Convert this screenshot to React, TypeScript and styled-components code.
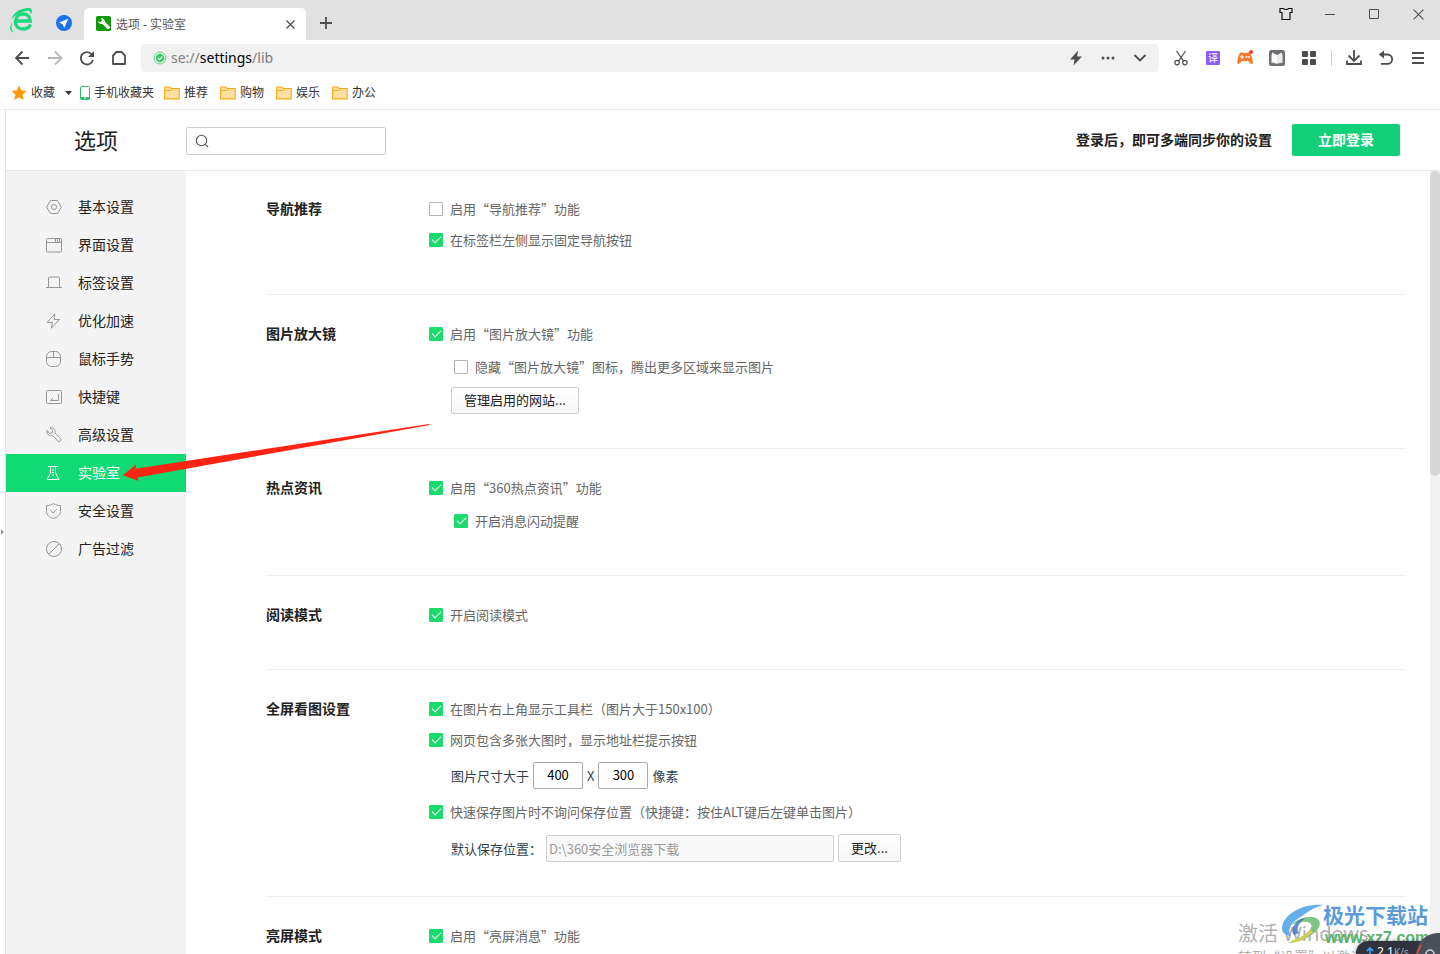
import React from "react";
import styled, { createGlobalStyle } from "styled-components";

const GlobalStyle = createGlobalStyle`
  *, *::before, *::after { box-sizing: border-box; }
  body {
    margin: 0;
    background: #fff;
    color: #222;
    font-family: "Noto Sans CJK SC", "Liberation Sans", sans-serif;
    font-size: 13px;
  }
  button, input { font-family: inherit; }
  svg { display: block; }
`;

const Browser = styled.div`
  position: relative;
  display: flex;
  flex-direction: column;
  height: 100vh;
  overflow: hidden;
`;

/* ---------- Title bar ---------- */

const TitleBar = styled.header`
  display: flex;
  flex: none;
  height: 40px;
  padding: 0 0 0 8px;
  background: #e1e1e1;
`;

const PlainButton = styled.button`
  display: flex;
  flex: none;
  align-items: center;
  justify-content: center;
  padding: 0;
  border: 0;
  background: none;
  color: #4d4d4d;
`;

const LogoButton = styled(PlainButton)`
  width: 28px;
  height: 40px;
`;

const PinnedTab = styled(PlainButton)`
  width: 24px;
  height: 46px;
  margin: 0 8px 0 16px;
`;

const Tab = styled.div`
  display: flex;
  align-items: center;
  width: 222px;
  height: 32px;
  margin-top: 8px;
  padding: 0 8px 0 12px;
  gap: 4px;
  border-radius: 5px 5px 0 0;
  background: #fff;
  color: #555;
  font-size: 12px;
`;

const TabTitle = styled.span`
  flex: 1;
  font-family: "Noto Sans", "Noto Sans CJK SC", sans-serif;
`;

const TabClose = styled(PlainButton)`
  width: 16px;
  height: 16px;
`;

const NewTab = styled(PlainButton)`
  width: 40px;
  height: 46px;
`;

const WindowControls = styled.div`
  display: flex;
  height: 28px;
  margin-left: auto;
`;

const WindowButton = styled(PlainButton)`
  width: 44px;
`;

/* ---------- Toolbar ---------- */

const Toolbar = styled.nav`
  display: flex;
  flex: none;
  align-items: center;
  height: 36px;
  padding: 0 6px 0 7px;
`;

const ToolButton = styled(PlainButton)`
  width: 32px;
  height: 28px;
`;

const AddressBar = styled.div`
  display: flex;
  flex: 1;
  align-items: center;
  height: 28px;
  margin: 0 6px;
  padding: 0 3px 0 12px;
  border-radius: 4px;
  background: #f1f1f1;
`;

const Address = styled.a`
  flex: 1;
  padding-left: 4px;
  color: #7d7d7d;
  font-family: "Noto Sans", sans-serif;
  font-size: 14px;
  line-height: 20px;
  text-decoration: none;
`;

const AddressHost = styled.span`
  color: #000;
`;

const ToolDivider = styled.span`
  width: 1px;
  height: 16px;
  margin: 0 6px;
  background: #ccc;
`;

/* ---------- Bookmarks ---------- */

const Bookmarks = styled.nav`
  display: flex;
  flex: none;
  align-items: center;
  height: 34px;
  padding-left: 11px;
  gap: 12px;
  border-bottom: 1px solid #e9e9e9;
`;

const Bookmark = styled.a`
  display: flex;
  align-items: center;
  gap: 4px;
  color: #333;
  font-size: 12px;
  line-height: 18px;
  text-decoration: none;
`;

const FavouriteGroup = styled.div`
  display: flex;
  align-items: center;
  gap: 10px;
  margin-right: -4px;
`;

const PhoneBookmark = styled(Bookmark)`
  margin-right: -2px;
`;

/* CJK glyphs sit low in their line box; the padding centres them beside an icon */
const Caption = styled.span`
  padding-bottom: 2px;
`;

/* ---------- Settings page ---------- */

const Viewport = styled.div`
  display: flex;
  flex: 1;
  min-height: 0;
`;

const Gutter = styled.div`
  display: flex;
  flex: none;
  align-items: center;
  width: 6px;
  border-right: 1px solid #e2e2e2;
`;

const Page = styled.div`
  display: flex;
  flex: 1;
  flex-direction: column;
  min-width: 0;
`;

const PageHeader = styled.header`
  display: flex;
  flex: none;
  align-items: center;
  height: 61px;
  padding-right: 40px;
  border-bottom: 1px solid #e9e9e9;
`;

const PageTitle = styled.h1`
  width: 180px;
  margin: 0;
  padding-bottom: 2px;
  font-size: 22px;
  font-weight: 400;
  line-height: 32px;
  text-align: center;
`;

const SearchBox = styled.label`
  display: flex;
  align-items: center;
  width: 200px;
  height: 28px;
  margin-top: 2px;
  padding: 0 8px;
  gap: 4px;
  border: 1px solid #ccc;
  border-radius: 2px;
`;

const SearchInput = styled.input`
  flex: 1;
  min-width: 0;
  border: 0;
  outline: 0;
  background: none;
`;

const LoginHint = styled.strong`
  margin: 0 20px 0 auto;
  padding-bottom: 2px;
  font-size: 14px;
  line-height: 20px;
`;

const LoginButton = styled.button`
  width: 108px;
  height: 32px;
  padding: 0 0 2px;
  border: 0;
  border-radius: 2px;
  background: #11d077;
  color: #fff;
  font-size: 14px;
  font-weight: 700;
`;

const PageBody = styled.div`
  display: flex;
  flex: 1;
  min-height: 0;
`;

const Sidebar = styled.nav`
  flex: none;
  width: 180px;
  padding-top: 17px;
  background: #f4f4f4;
`;

const SidebarLink = styled.a<{ $active: boolean }>`
  display: flex;
  align-items: center;
  height: 38px;
  padding-left: 40px;
  gap: 16px;
  background: ${(p) => (p.$active ? "#11da75" : "transparent")};
  color: ${(p) => (p.$active ? "#fff" : "#222")};
  font-size: 14px;
  text-decoration: none;

  svg { color: ${(p) => (p.$active ? "#fff" : "#969696")}; }
`;

const Content = styled.main`
  flex: 1;
  min-width: 0;
  padding: 0 24px 0 80px;
  overflow: hidden;
`;

const Section = styled.section<{ $tight?: boolean }>`
  display: grid;
  grid-template-columns: 163px 1fr;
  padding: 29px 0 ${(p) => (p.$tight ? 34 : 44)}px;
  border-bottom: 1px solid #efefef;

  &:first-child { padding-top: 28px; }
`;

const SectionTitle = styled.h2`
  margin: 0;
  font-size: 14px;
  font-weight: 700;
  line-height: 18px;
`;

const Options = styled.div`
  display: flex;
  flex-direction: column;
  align-items: flex-start;
  gap: 10px;
`;

const leads = { none: 0, list: 1, block: 3 };

const CheckLabel = styled.label<{ $sub?: boolean; $lead: keyof typeof leads }>`
  display: flex;
  align-items: center;
  height: 20px;
  gap: 7px;
  margin-top: ${(p) => leads[p.$lead]}px;
  margin-left: ${(p) => (p.$sub ? 25 : 0)}px;
  color: #666;
`;

const Checkbox = styled.input`
  display: flex;
  justify-content: center;
  width: 14px;
  height: 14px;
  margin: 0;
  padding-top: 2px;
  appearance: none;
  border: 1px solid #b4b4b4;
  border-radius: 1px;
  background: #fff;

  &:checked {
    border-color: #1cda6c;
    background: #1cda6c;
  }

  &:checked::before {
    content: "";
    width: 9px;
    height: 5px;
    border: solid #fff;
    border-width: 0 0 1px 1px;
    transform: rotate(-45deg);
  }
`;

const FieldRow = styled.div`
  display: flex;
  align-items: center;
  margin: 2px 0 0 22px;
  gap: 4px;
  color: #333f50;
`;

const SizeInput = styled.input`
  width: 50px;
  height: 27px;
  padding: 0 0 2px;
  border: 1px solid #aaa;
  border-radius: 2px;
  color: #000;
  font-size: 13px;
  text-align: center;
`;

const PathInput = styled.input`
  width: 288px;
  height: 27px;
  padding: 0 2px;
  border: 1px solid #d0d0d0;
  border-radius: 2px;
  background: #f9f9f9;
  color: #999;
  font-size: 13px;
`;

const ActionButton = styled.button<{ $wide?: boolean }>`
  width: ${(p) => (p.$wide ? 128 : 63)}px;
  height: ${(p) => (p.$wide ? 27 : 28)}px;
  margin-left: ${(p) => (p.$wide ? 22 : 0)}px;
  padding: 0 0 2px;
  border: 1px solid #d0d0d0;
  border-radius: 2px;
  background: linear-gradient(#fff, #f6f6f6);
  color: #222;
  font-size: 13px;
`;

const ScrollTrack = styled.div`
  flex: none;
  width: 10px;
  background: #f1f1f1;
`;

const ScrollThumb = styled.div`
  height: 39%;
  border-radius: 5px;
  background: #d6d6d6;
`;

/* ---------- Overlays ---------- */

const ArrowOverlay = styled.svg`
  position: absolute;
  top: 424px;
  left: 122px;
  pointer-events: none;
`;

const DesktopOverlay = styled.aside`
  position: absolute;
  right: 0;
  bottom: 0;
  width: 204px;
  height: 54px;
  overflow: hidden;
  pointer-events: none;
`;

const ActivateNotice = styled.p`
  position: absolute;
  top: 19px;
  left: 2px;
  margin: 0;
  color: rgba(120, 120, 120, 0.6);
  font-family: "Noto Sans", "Noto Sans CJK SC", sans-serif;
  font-size: 20px;
  line-height: 30px;
  white-space: nowrap;
`;

const ActivateHint = styled.p`
  position: absolute;
  top: 46px;
  left: 2px;
  margin: 0;
  color: rgba(120, 120, 120, 0.6);
  font-size: 14px;
  line-height: 20px;
  white-space: nowrap;
`;

const SiteMark = styled.svg`
  position: absolute;
  top: 3px;
  left: 43px;
`;

const SiteName = styled.p`
  position: absolute;
  top: 0;
  left: 87px;
  margin: 0;
  color: #5b9bd9;
  font-size: 21px;
  font-weight: 700;
  line-height: 28px;
  white-space: nowrap;
`;

const SiteUrl = styled.p`
  position: absolute;
  top: 28px;
  left: 89px;
  margin: 0;
  color: #5cb46d;
  font-family: "Liberation Sans", sans-serif;
  font-size: 16px;
  font-weight: 700;
  line-height: 20px;
`;

const SpeedBadge = styled.div`
  position: absolute;
  top: 41px;
  left: 120px;
  display: flex;
  align-items: center;
  width: 84px;
  height: 24px;
  padding: 0 0 4px 10px;
  gap: 3px;
  border-radius: 12px 0 0 0;
  background: #30333e;
  color: #fff;
  font-family: "Noto Sans", sans-serif;
  font-size: 12px;
  box-shadow: 0 0 4px rgba(0, 0, 0, 0.4);
`;

const SpeedUnit = styled.span`
  color: #a8aab0;
  font-size: 10px;
`;

const SpeedBall = styled.svg`
  position: absolute;
  top: 31px;
  right: 0;
`;

/* ---------- Icons ---------- */

const line = (width = 1) => ({
  fill: "none",
  stroke: "currentColor",
  strokeWidth: width,
});

const BrowserLogo = () => (
  <svg width="26" height="26" viewBox="0 0 26 26">
    <path
      d="M6.500 14h14.700C21 9.800 18.300 7 14 7S6.900 9.800 6.500 14zM21.600 17.500C20.200 20.500 17.600 22 14 22c-4.800 0-7.700-3.200-7.700-7.500"
      fill="none"
      stroke="#1bd97b"
      strokeWidth="3.400"
    />
    <path d="M2.500 12.500C4 6 10 2 17 1.200c3.800-.5 6.500.4 6 3-.3 1.500-1 2.500-1.700 3.400.6-2.800-.4-4.100-3.100-3.700C12 4.500 6 7.800 2.500 12.500z" fill="#1bd97b" />
    <path d="M3.600 14.500C2.300 19 1.800 23 5 25.500c-4.500-.6-5-5.500-1.400-11z" fill="#1bd97b" />
  </svg>
);

const PinnedIcon = () => (
  <svg width="16" height="16" viewBox="0 0 16 16">
    <circle cx="8" cy="8" r="8" fill="#1a73e8" />
    <path d="M12.300 3.800 3 7.600l3.700 1.600L8.200 13z" fill="#fff" />
  </svg>
);

const TabIcon = () => (
  <svg width="16" height="16" viewBox="0 0 16 16">
    <rect width="15" height="15" rx="1.500" fill="#15990b" />
    <path d="M2 5 4.200 6.200 5.900 4.600 5 2.200c2.200-.3 4 1.200 3.700 3.300l4.700 4.700a1.600 1.600 0 0 1-2.300 2.300L6.400 8C4.300 8.500 2.200 7.100 2 5z" fill="#fff" />
  </svg>
);

const CrossIcon = ({ size = 9 }: { size?: number }) => (
  <svg width={size} height={size} viewBox="0 0 9 9">
    <path d="M.5.5l8 8M8.500.5l-8 8" {...line(size > 9 ? 0.9 : 1.300)} />
  </svg>
);

const PlusIcon = () => (
  <svg width="12" height="12" viewBox="0 0 12 12">
    <path d="M6 0v12M0 6h12" {...line(1.800)} />
  </svg>
);

const ShirtIcon = () => (
  <svg width="14" height="14" viewBox="0 0 14 14">
    <path d="M1 1.500h3.500c.5 1.300 4.500 1.300 5 0H13v4h-2v7H3v-7H1z" fill="none" stroke="#111" strokeWidth="1.200" />
  </svg>
);

const MinimizeIcon = () => (
  <svg width="10" height="10" viewBox="0 0 10 10"><path d="M0 5.500h10" {...line()} /></svg>
);

const MaximizeIcon = () => (
  <svg width="10" height="10" viewBox="0 0 10 10"><path d="M.5.5h9v9h-9z" {...line()} /></svg>
);

const BackIcon = () => (
  <svg width="16" height="16" viewBox="0 0 16 16"><path d="M14 8H1.500M7.500 1.500 1 8l6.500 6.500" {...line(1.800)} /></svg>
);

const ForwardIcon = () => (
  <svg width="16" height="16" viewBox="0 0 16 16" color="#b9b9b9"><path d="M1 8h13M8 1.500 14.500 8 8 14.500" {...line(1.800)} /></svg>
);

const ReloadIcon = () => (
  <svg width="16" height="16" viewBox="0 0 16 16">
    <path d="M12.800 4.300A6.200 6.200 0 1 0 14 10" {...line(1.800)} />
    <path d="M15 1v6H9z" fill="currentColor" />
  </svg>
);

const HomeIcon = () => (
  <svg width="16" height="16" viewBox="0 0 16 16">
    <path d="M2 14V5.500L5.500 2h5L14 5.500V14z" {...line(1.800)} strokeLinejoin="round" />
  </svg>
);

const SafeIcon = () => (
  <svg width="14" height="14" viewBox="0 0 14 14">
    <circle cx="7" cy="7" r="6" fill="#e0f5e7" stroke="#6cd48b" />
    <circle cx="7" cy="7" r="4.300" fill="#41cb6c" />
    <path d="M4.800 7l1.700 1.700 2.800-3" fill="none" stroke="#fff" strokeWidth="1.100" />
  </svg>
);

const FlashIcon = () => (
  <svg width="14" height="16" viewBox="0 0 14 16"><path d="M9.200.5 1 9.500h4.600L4.500 15.500 13 6.600H8z" fill="currentColor" /></svg>
);

const DotsIcon = () => (
  <svg width="14" height="4" viewBox="0 0 14 4" fill="currentColor">
    <circle cx="2" cy="2" r="1.500" /><circle cx="7" cy="2" r="1.500" /><circle cx="12" cy="2" r="1.500" />
  </svg>
);

const ChevronIcon = () => (
  <svg width="14" height="8" viewBox="0 0 14 8"><path d="M1.500 1 7 6.500 12.500 1" {...line(1.900)} /></svg>
);

const ScissorsIcon = () => (
  <svg width="14" height="16" viewBox="0 0 14 16">
    <path d="M2.500 1l7 10.200M11.500 1l-7 10.200" {...line(1.200)} />
    <circle cx="3.100" cy="12.600" r="2.200" {...line(1.200)} />
    <circle cx="10.900" cy="12.600" r="2.200" {...line(1.200)} />
  </svg>
);

const TranslateBadge = styled.span`
  width: 14px;
  height: 14px;
  border-radius: 1px;
  background: #8f5cf5;
  color: #fff;
  font-size: 10px;
  line-height: 13px;
`;

const GameIcon = () => (
  <svg width="16" height="16" viewBox="0 0 16 16">
    <path d="M3.500 2.500c1.500-1 2.500.5 4.500.5s3-1.500 4.500-.5C14.500 4 16.500 12 15.300 14c-1.300 1.500-3-2.500-4.300-3H5c-1.300.5-3 4.500-4.300 3C-.5 12 1.500 4 3.500 2.500z" fill="#fb7a29" />
    <path d="M5 5v4M3 7h4" stroke="#fff" strokeWidth="1.200" />
    <circle cx="9.500" cy="7" r="1" fill="#fff" /><circle cx="12" cy="7" r="1" fill="#fff" />
    <circle cx="14" cy="2" r="2" fill="#fb3b3b" />
  </svg>
);

const ReaderIcon = () => (
  <svg width="16" height="16" viewBox="0 0 16 16">
    <rect width="16" height="16" rx="2.500" fill="#6d6f75" />
    <path d="M2 4.500 8 5.500l6-1V13l-6 .8L2 13z" fill="#b4b6ba" />
    <path d="M3 2.500 8 5v8.500L3 12z" fill="#fff" />
    <path d="M13 2.500 8 5v8.500l5-1.500z" fill="#ececee" />
  </svg>
);

const GridIcon = () => (
  <svg width="14" height="14" viewBox="0 0 14 14" fill="currentColor">
    <rect width="6" height="6" rx="1" /><rect x="8" width="6" height="6" rx="1" />
    <rect y="8" width="6" height="6" rx="1" /><rect x="8" y="8" width="6" height="6" rx="1" />
  </svg>
);

const DownloadIcon = () => (
  <svg width="16" height="16" viewBox="0 0 16 16">
    <path d="M8 0v11M2.500 5.500 8 11l5.500-5.500M1 10.500V14h14v-3.500" {...line(1.800)} />
  </svg>
);

const UndoIcon = () => (
  <svg width="16" height="16" viewBox="0 0 16 16">
    <path d="M3 4.500h6.500a4.700 4.700 0 0 1 0 9.400H3" {...line(1.800)} />
    <path d="M6 .5v8L.8 4.500z" fill="currentColor" />
  </svg>
);

const MenuIcon = () => (
  <svg width="12" height="12" viewBox="0 0 12 12"><path d="M0 1h12M0 6h12M0 11h12" {...line(1.800)} /></svg>
);

const StarIcon = () => (
  <svg width="16" height="16" viewBox="0 0 16 16">
    <path d="M8 .5l2.200 5.100 5.400.4-4.100 3.600 1.300 5.400L8 12.200 3.200 15l1.300-5.400L.4 6l5.400-.4z" fill="#ff9800" />
  </svg>
);

const CaretIcon = () => (
  <svg width="7" height="4" viewBox="0 0 7 4"><path d="M0 0h7L3.500 4z" fill="#333" /></svg>
);

const PhoneIcon = () => (
  <svg width="10" height="14" viewBox="0 0 10 14">
    <rect x="0.500" y="0.500" width="9" height="13" rx="1" fill="#fff" stroke="#35b96b" />
    <path d="M0 11h10v2H0z" fill="#35b96b" /><path d="M4 12h2" stroke="#fff" />
  </svg>
);

const FolderIcon = () => (
  <svg width="16" height="14" viewBox="0 0 16 14">
    <path d="M.6 12.900V1h5.200L7.300 2.500h7.900v10.400z" fill="#ffe0a0" stroke="#fba919" strokeWidth="1.100" />
    <path d="M1 4.500h6.500l1-1.500" fill="none" stroke="#fba919" strokeWidth="1" />
  </svg>
);

const SearchIcon = () => (
  <svg width="14" height="14" viewBox="0 0 14 14" color="#555">
    <circle cx="6.500" cy="6.500" r="5.200" {...line(1.100)} /><path d="M10.300 10.300 13 13" {...line(1.200)} />
  </svg>
);

const sideIcons: Record<string, React.ReactNode> = {
  basic: <><path d="M4.500 1.500h7L15.400 8l-3.900 6.500h-7L.6 8z" /><circle cx="8" cy="8" r="2.500" /></>,
  window: <><rect x="0.500" y="1.500" width="15" height="13.500" rx="1" /><path d="M.5 5.500h15M9.500 2v3M11.500 2v3M13.500 2v3" /></>,
  tab: <path d="M2.500 12V3a1 1 0 0 1 1-1h9a1 1 0 0 1 1 1v9M0 12.500h16" />,
  bolt: <path d="M8.800.8 1.200 9.300h5.300l-1.300 6L13.500 6.500H8.200z" strokeLinejoin="round" />,
  mouse: <><rect x="0.500" y="0.500" width="14" height="15" rx="5" /><path d="M.5 6.500h14M7.500.5v6" /></>,
  key: <><rect x="0.500" y="1.500" width="15" height="13" rx="1" /><path d="M12.500 5v6.500h-8L7 9" /></>,
  wrench: <path d="M1 3.500 4 6.400l2.300-.6.500-2.200L4 .9c3-.8 5.900 1.700 5 5l5.500 5.500a1.700 1.700 0 0 1-2.600 2.600L6.700 8.600C3.500 9.700.2 6.800 1 3.500z" />,
  flask: <path d="M2 1.500h10M4.500 2v6L1 14.500h12L9.500 8V2M6 5h2M6 7.500h2M6 10h2" />,
  shield: <><path d="M7.500.7c2.500 1.400 4.500 1.800 7 1.800v6c0 3.500-3 5.700-7 7-4-1.300-7-3.500-7-7v-6c2.500 0 4.500-.4 7-1.800z" /><path d="M4.500 7.500 7 10l4-4" /></>,
  block: <><circle cx="8" cy="8" r="7.500" /><path d="M2.700 13.300 13.300 2.700" /></>,
};

const SideIcon = ({ name }: { name: string }) => (
  <svg width="16" height="16" viewBox="0 0 16 16" {...line()}>{sideIcons[name]}</svg>
);

const RedArrow = () => (
  <ArrowOverlay width="310" height="60" viewBox="0 0 310 60" aria-hidden="true">
    <path d="M.7 51.300 14.300 40.300 13.500 44.700 307 0 308 1 15.300 53.400 16.700 57z" fill="#ff2414" />
  </ArrowOverlay>
);

/* ---------- Data ---------- */

const menu = [
  { icon: "basic", label: "基本设置" },
  { icon: "window", label: "界面设置" },
  { icon: "tab", label: "标签设置" },
  { icon: "bolt", label: "优化加速" },
  { icon: "mouse", label: "鼠标手势" },
  { icon: "key", label: "快捷键" },
  { icon: "wrench", label: "高级设置" },
  { icon: "flask", label: "实验室" },
  { icon: "shield", label: "安全设置" },
  { icon: "block", label: "广告过滤" },
];

const folders = ["推荐", "购物", "娱乐", "办公"];

type CheckProps = {
  children: React.ReactNode;
  on?: boolean;
  sub?: boolean;
  lead?: keyof typeof leads;
};

const Check = ({ children, on = true, sub, lead = "none" }: CheckProps) => (
  <CheckLabel $sub={sub} $lead={lead}>
    <Checkbox type="checkbox" defaultChecked={on} />
    <Caption>{children}</Caption>
  </CheckLabel>
);

export default function App() {
  return (
    <Browser lang="zh-CN">
      <GlobalStyle />
      <TitleBar>
        <LogoButton aria-label="浏览器"><BrowserLogo /></LogoButton>
        <PinnedTab aria-label="导航"><PinnedIcon /></PinnedTab>
        <Tab>
          <TabIcon />
          <TabTitle>选项 - 实验室</TabTitle>
          <TabClose aria-label="关闭标签"><CrossIcon /></TabClose>
        </Tab>
        <NewTab aria-label="新标签"><PlusIcon /></NewTab>
        <WindowControls>
          <WindowButton aria-label="皮肤"><ShirtIcon /></WindowButton>
          <WindowButton aria-label="最小化"><MinimizeIcon /></WindowButton>
          <WindowButton aria-label="最大化"><MaximizeIcon /></WindowButton>
          <WindowButton aria-label="关闭"><CrossIcon size={11} /></WindowButton>
        </WindowControls>
      </TitleBar>

      <Toolbar>
        <ToolButton aria-label="后退"><BackIcon /></ToolButton>
        <ToolButton aria-label="前进"><ForwardIcon /></ToolButton>
        <ToolButton aria-label="刷新"><ReloadIcon /></ToolButton>
        <ToolButton aria-label="主页"><HomeIcon /></ToolButton>
        <AddressBar>
          <SafeIcon />
          <Address href="#lib">se://<AddressHost>settings</AddressHost>/lib</Address>
          <ToolButton aria-label="极速模式"><FlashIcon /></ToolButton>
          <ToolButton aria-label="更多"><DotsIcon /></ToolButton>
          <ToolButton aria-label="展开"><ChevronIcon /></ToolButton>
        </AddressBar>
        <ToolButton aria-label="截图"><ScissorsIcon /></ToolButton>
        <ToolButton aria-label="翻译"><TranslateBadge>译</TranslateBadge></ToolButton>
        <ToolButton aria-label="游戏"><GameIcon /></ToolButton>
        <ToolButton aria-label="阅读"><ReaderIcon /></ToolButton>
        <ToolButton aria-label="扩展"><GridIcon /></ToolButton>
        <ToolDivider />
        <ToolButton aria-label="下载"><DownloadIcon /></ToolButton>
        <ToolButton aria-label="恢复"><UndoIcon /></ToolButton>
        <ToolButton aria-label="菜单"><MenuIcon /></ToolButton>
      </Toolbar>

      <Bookmarks>
        <FavouriteGroup>
          <Bookmark href="#favourites"><StarIcon /><Caption>收藏</Caption></Bookmark>
          <CaretIcon />
        </FavouriteGroup>
        <PhoneBookmark href="#phone"><PhoneIcon /><Caption>手机收藏夹</Caption></PhoneBookmark>
        {folders.map((name) => (
          <Bookmark key={name} href={`#${name}`}><FolderIcon /><Caption>{name}</Caption></Bookmark>
        ))}
      </Bookmarks>

      <Viewport>
        <Gutter>
          <svg width="4" height="6" viewBox="0 0 4 6"><path d="M1 0l3 3-3 3z" fill="#999" /></svg>
        </Gutter>
        <Page>
          <PageHeader>
            <PageTitle>选项</PageTitle>
            <SearchBox>
              <SearchIcon />
              <SearchInput type="text" aria-label="搜索选项" />
            </SearchBox>
            <LoginHint>登录后，即可多端同步你的设置</LoginHint>
            <LoginButton>立即登录</LoginButton>
          </PageHeader>
          <PageBody>
            <Sidebar>
              {menu.map((item) => (
                <SidebarLink key={item.icon} href={`#${item.icon}`} $active={item.icon === "flask"}>
                  <SideIcon name={item.icon} />
                  <Caption>{item.label}</Caption>
                </SidebarLink>
              ))}
            </Sidebar>
            <Content>
              <Section>
                <SectionTitle>导航推荐</SectionTitle>
                <Options>
                  <Check on={false}>启用“导航推荐”功能</Check>
                  <Check lead="list">在标签栏左侧显示固定导航按钮</Check>
                </Options>
              </Section>
              <Section $tight>
                <SectionTitle>图片放大镜</SectionTitle>
                <Options>
                  <Check>启用“图片放大镜”功能</Check>
                  <Check on={false} sub lead="block">隐藏“图片放大镜”图标，腾出更多区域来显示图片</Check>
                  <ActionButton $wide>管理启用的网站...</ActionButton>
                </Options>
              </Section>
              <Section>
                <SectionTitle>热点资讯</SectionTitle>
                <Options>
                  <Check>启用“360热点资讯”功能</Check>
                  <Check sub lead="block">开启消息闪动提醒</Check>
                </Options>
              </Section>
              <Section>
                <SectionTitle>阅读模式</SectionTitle>
                <Options>
                  <Check>开启阅读模式</Check>
                </Options>
              </Section>
              <Section $tight>
                <SectionTitle>全屏看图设置</SectionTitle>
                <Options>
                  <Check>在图片右上角显示工具栏（图片大于150x100）</Check>
                  <Check lead="list">网页包含多张大图时，显示地址栏提示按钮</Check>
                  <FieldRow>
                    <label htmlFor="min-width">图片尺寸大于</label>
                    <SizeInput id="min-width" type="text" defaultValue="400" />
                    <label htmlFor="min-height">X</label>
                    <SizeInput id="min-height" type="text" defaultValue="300" />
                    <span>像素</span>
                  </FieldRow>
                  <Check lead="block">快速保存图片时不询问保存位置（快捷键：按住ALT键后左键单击图片）</Check>
                  <FieldRow>
                    <label htmlFor="save-path">默认保存位置：</label>
                    <PathInput id="save-path" type="text" defaultValue="D:\360安全浏览器下载" readOnly />
                    <ActionButton>更改...</ActionButton>
                  </FieldRow>
                </Options>
              </Section>
              <Section>
                <SectionTitle>亮屏模式</SectionTitle>
                <Options>
                  <Check>启用“亮屏消息”功能</Check>
                </Options>
              </Section>
            </Content>
            <ScrollTrack><ScrollThumb /></ScrollTrack>
          </PageBody>
        </Page>
      </Viewport>

      <RedArrow />
      <DesktopOverlay>
        <ActivateNotice>激活 Windows</ActivateNotice>
        <ActivateHint>转到“设置”以激活 Windows。</ActivateHint>
        <SiteMark width="46" height="42" viewBox="0 0 46 42">
          <path d="M44 2C26 0 5 10 3 24c-.6 5 3 8.500 9 9-4-6-.5-13 8-18C27 10 34 5 44 2z" fill="#55a6e6" opacity="0.900" />
          <path d="M12 22c5-5 14-9 22-8 8 1.500 9 8 3 14-7 7-17 12-28 12 10-4 20-9 23-15 2-5-3-7-9-6-4 .5-8 1.500-11 3z" fill="#6fbe78" opacity="0.900" />
          <path d="M13 37c8-2 15-6 18-11l3 3c-6 6-13 10-22 11z" fill="#e6d64c" opacity="0.800" />
          <path d="M22 16c-8 5-11 11-7 16l5-2c-3-4-1-9 6-15z" fill="#3b72c4" opacity="0.800" />
        </SiteMark>
        <SiteName>极光下载站</SiteName>
        <SiteUrl>www.xz7.com</SiteUrl>
        <SpeedBadge>
          <svg width="8" height="10" viewBox="0 0 8 10"><path d="M4 10V2M1 5l3-3 3 3" fill="none" stroke="#2fa8f5" strokeWidth="1.600" /></svg>
          <span>2.1<SpeedUnit>K/s</SpeedUnit></span>
        </SpeedBadge>
        <SpeedBall width="24" height="23" viewBox="0 0 24 23">
          <circle cx="22" cy="24" r="22" fill="#4b4e5b" />
          <path d="M1 23l4-9" stroke="#e8503c" strokeWidth="1.500" />
          <circle cx="14" cy="23" r="4" fill="none" stroke="#ddd" strokeWidth="1.500" />
        </SpeedBall>
      </DesktopOverlay>
    </Browser>
  );
}
